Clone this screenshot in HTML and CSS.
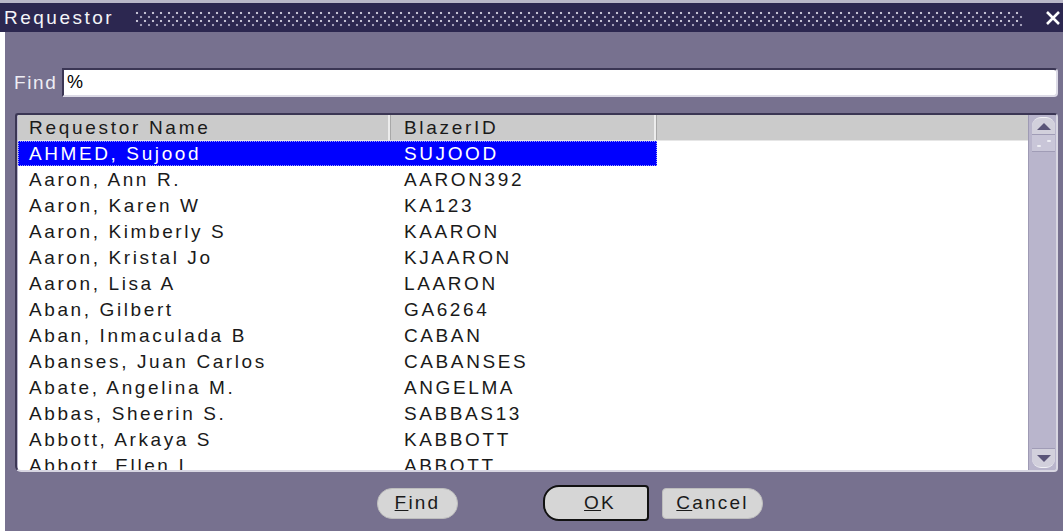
FILE: index.html
```html
<!DOCTYPE html>
<html>
<head>
<meta charset="utf-8">
<title>Requestor</title>
<link rel="stylesheet" href="styles.css">
</head>
<body>
<div class="window">
  <div class="titlebar">
    <span class="title">Requestor</span>
    <span class="grip"></span>
    <span class="close"><svg width="16" height="14" viewBox="0 0 16 14"><path d="M2 1 L14 13 M14 1 L2 13" stroke="#ffffff" stroke-width="2.6" fill="none"/></svg></span>
  </div>
  <div class="client">
    <div class="find-row">
      <label class="find-label">Find</label>
      <div class="find-input">%</div>
    </div>
    <div class="list">
      <div class="list-body">
        <div class="grid">
          <div class="head">
            <div class="hcell c1">Requestor Name</div>
            <div class="hcell c2">BlazerID</div>
            <div class="hcell c3"></div>
          </div>
          <div class="rows">
            <div class="row sel"><span class="c1">AHMED, Sujood</span><span class="c2">SUJOOD</span></div>
            <div class="row"><span class="c1">Aaron, Ann R.</span><span class="c2">AARON392</span></div>
            <div class="row"><span class="c1">Aaron, Karen W</span><span class="c2">KA123</span></div>
            <div class="row"><span class="c1">Aaron, Kimberly S</span><span class="c2">KAARON</span></div>
            <div class="row"><span class="c1">Aaron, Kristal Jo</span><span class="c2">KJAARON</span></div>
            <div class="row"><span class="c1">Aaron, Lisa A</span><span class="c2">LAARON</span></div>
            <div class="row"><span class="c1">Aban, Gilbert</span><span class="c2">GA6264</span></div>
            <div class="row"><span class="c1">Aban, Inmaculada B</span><span class="c2">CABAN</span></div>
            <div class="row"><span class="c1">Abanses, Juan Carlos</span><span class="c2">CABANSES</span></div>
            <div class="row"><span class="c1">Abate, Angelina M.</span><span class="c2">ANGELMA</span></div>
            <div class="row"><span class="c1">Abbas, Sheerin S.</span><span class="c2">SABBAS13</span></div>
            <div class="row"><span class="c1">Abbott, Arkaya S</span><span class="c2">KABBOTT</span></div>
            <div class="row"><span class="c1">Abbott, Ellen I</span><span class="c2">ABBOTT</span></div>
          </div>
        </div>
        <div class="vscroll">
          <div class="sbtn up"><svg width="14" height="7" viewBox="0 0 14 7"><polygon points="0,7 7,0 14,7" fill="#5a5478"/></svg></div>
          <div class="thumb"><i></i><i></i></div>
          <div class="track"></div>
          <div class="sbtn down"><svg width="14" height="7" viewBox="0 0 14 7"><polygon points="0,0 7,7 14,0" fill="#5a5478"/></svg></div>
        </div>
      </div>
    </div>
    <div class="buttons">
      <button class="btn find"><u>F</u>ind</button>
      <button class="btn ok"><u>O</u>K</button>
      <button class="btn cancel"><u>C</u>ancel</button>
    </div>
  </div>
</div>
</body>
</html>
```

FILE: styles.css
```css
html, body {
  margin: 0;
  padding: 0;
  background: #ffffff;
}

body {
  width: 1063px;
  height: 531px;
  overflow: hidden;
  font-family: "Liberation Sans", Arial, sans-serif;
}

.window {
  display: flex;
  flex-direction: column;
  height: 531px;
}

/* caption bar */
.titlebar {
  height: 29px;
  border-top: 3px solid #b9b7c8;
  background: #2c2750;
  display: flex;
  align-items: center;
  color: #ffffff;
  flex-shrink: 0;
}

.title {
  font-size: 19px;
  letter-spacing: 2.5px;
  padding-left: 4px;
  width: 131px;
  color: #f4f4f8;
}

/* raised dot texture of the drag area */
.grip {
  flex: 1;
  height: 16px;
  margin-right: 22px;
  margin-top: 2px;
  background-image:
    radial-gradient(circle at 2px 2px, #c4c1d3 1.1px, transparent 1.6px),
    radial-gradient(circle at 2px 2px, #a29eb8 1.1px, transparent 1.6px);
  background-size: 8px 8px;
  background-position: 0 0, 4px 4px;
}

.close {
  width: 18px;
  display: flex;
  align-items: center;
}

/* dialog body */
.client {
  flex: 1;
  margin-left: 5px;
  background: #77718f;
  display: flex;
  flex-direction: column;
  padding: 36px 5px 0 9px;
}

.find-row {
  display: flex;
  align-items: center;
  height: 29px;
}

.find-label {
  color: #eeedf4;
  font-size: 19px;
  letter-spacing: 1.6px;
  width: 48px;
}

.find-input {
  flex: 1;
  background: #ffffff;
  border-top: 2px solid #3b3654;
  border-left: 2px solid #3b3654;
  border-right: 2px solid #dcdae6;
  border-bottom: 2px solid #dcdae6;
  border-radius: 0 4px 4px 0;
  font-size: 18px;
  line-height: 25px;
  padding-left: 3px;
  box-sizing: border-box;
  height: 29px;
}

/* list of values */
.list {
  margin: 16px 0 0 1px;
  height: 359px;
  border-top: 2px solid #3b3654;
  border-left: 2px solid #3b3654;
  border-right: 2px solid #d8d6e2;
  border-bottom: 2px solid #d8d6e2;
  border-radius: 3px 4px 4px 6px;
  box-sizing: border-box;
  background: #b9b5cc;
  overflow: hidden;
}

.list-body {
  display: flex;
  height: 100%;
}

.grid {
  flex: 1;
  display: flex;
  flex-direction: column;
  overflow: hidden;
  padding: 0 0 0 1px;
}

.head {
  display: flex;
  height: 25px;
  background: #cbcbcb;
  border-bottom: 1px solid #e6e6e6;
  flex-shrink: 0;
}

.hcell {
  font-size: 19px;
  letter-spacing: 2.7px;
  line-height: 25px;
  color: #1a1a1a;
  box-sizing: border-box;
  border-right: 1px solid #a8a8a8;
  box-shadow: inset -2px 0 0 #ececec;
}

.rows {
  flex: 1;
  background: #ffffff;
  overflow: hidden;
}

.c1 { width: 373px; flex-shrink: 0; padding-left: 11px; box-sizing: border-box; }
.c2 { width: 266px; flex-shrink: 0; padding-left: 13px; box-sizing: border-box; }
.c3 { flex: 1; border-right: none; box-shadow: none; }

.row {
  display: flex;
  height: 26px;
  line-height: 26px;
  font-size: 19px;
  letter-spacing: 2.6px;
  color: #1a1a1a;
  white-space: nowrap;
}

.row.sel {
  width: 639px;
  height: 25px;
  line-height: 25px;
  background: #0000ff;
  color: #ffffff;
  outline: 1px dotted #9c9cff;
  outline-offset: -1px;
  margin-bottom: 1px;
}

/* scroll bar */
.vscroll {
  width: 28px;
  background: #b9b5cc;
  display: flex;
  flex-direction: column;
  padding: 2px 1px 2px 3px;
  box-sizing: border-box;
  border-left: 1px solid #9e9ab4;
}

.sbtn {
  background: #d2d0dc;
  display: flex;
  align-items: center;
  justify-content: center;
}

.sbtn.up {
  height: 16px;
  border-radius: 9px 9px 0 0;
  border-top: 1px solid #f2f2f6;
  border-bottom: 1px solid #a09cb6;
}

.sbtn.down {
  height: 18px;
  border-radius: 0 0 9px 9px;
  border-bottom: 1px solid #f2f2f6;
  border-top: 1px solid #a09cb6;
}

.thumb {
  height: 16px;
  background: #c9c6d8;
  border-bottom: 1px solid #a09cb6;
  display: flex;
  align-items: center;
  justify-content: center;
  gap: 6px;
}

.thumb i {
  width: 4px;
  height: 2px;
  background: #eeeef4;
  border-radius: 1px;
}

.thumb i:first-child { margin-top: 5px; }
.thumb i:last-child { margin-top: -4px; }

.track {
  flex: 1;
}

/* command buttons */
.buttons {
  display: flex;
  align-items: center;
  height: 59px;
  padding: 3px 0 0 363px;
  box-sizing: border-box;
}

.btn {
  font-family: "Liberation Sans", Arial, sans-serif;
  font-size: 19px;
  letter-spacing: 2.2px;
  color: #1a1a1a;
  background: #d6d6d6;
  border: 1px solid #bdbdbd;
  border-radius: 15px;
  height: 31px;
  padding: 0;
}

.btn.find { width: 81px; margin-right: 85px; }

.btn.ok {
  width: 106px;
  height: 36px;
  margin-right: 13px;
  border: 2px solid #111111;
  border-radius: 16px 4px 4px 16px;
  padding-left: 8px;
}

.btn.cancel {
  width: 101px;
  border-radius: 4px 15px 15px 4px;
}
```
